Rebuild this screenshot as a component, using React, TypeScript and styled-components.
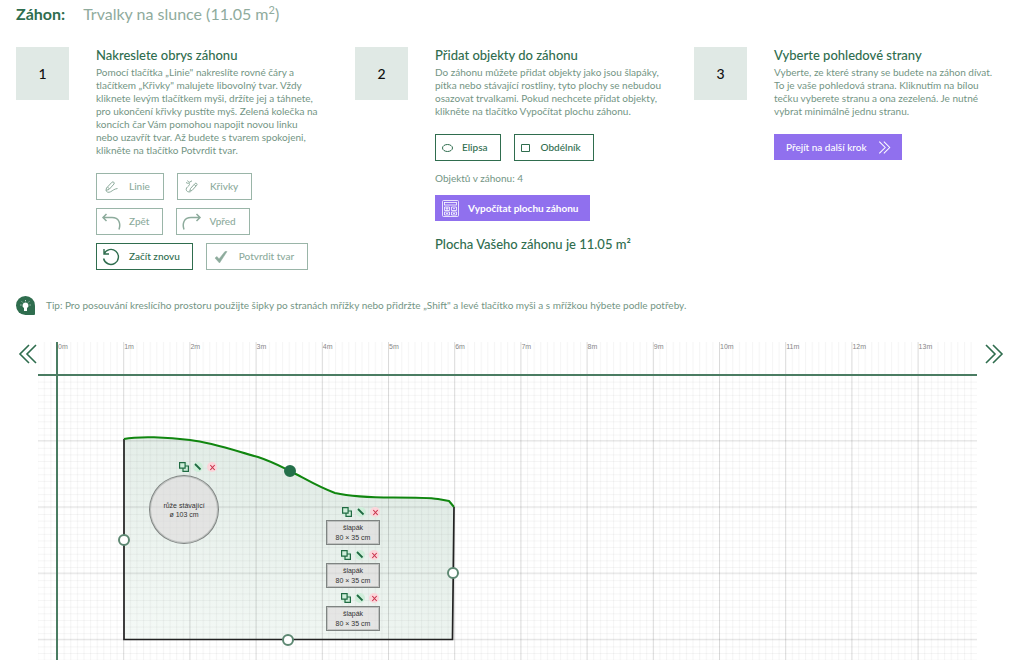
import React from "react";
import styled, { createGlobalStyle, css } from "styled-components";

const green = "#2f6d4e";
const softGreen = "#739584";
const purple = "#9070ee";

const GlobalStyle = createGlobalStyle`
  * { box-sizing: border-box; }
  body { margin: 0; background: #fff; font-family: Lato, "Liberation Sans", sans-serif; }
  h1, h2, p { margin: 0; }
  button { font-family: inherit; cursor: pointer; }
`;

const Page = styled.main`
  display: flex;
  flex-direction: column;
  min-height: 100vh;
  overflow: hidden;
`;

const TitleBar = styled.h1`
  display: flex;
  align-items: center;
  gap: 18px;
  height: 28px;
  padding: 0 16px;
  color: ${green};
  font-size: 16px;
  font-weight: 700;
  line-height: 20px;
`;

const BedName = styled.span`
  color: #8fab9d;
  font-size: 16px;
  font-weight: 400;
  sup { font-size: 11px; line-height: 0; }
`;

const Steps = styled.section`
  display: grid;
  grid-template-columns: repeat(3, minmax(0, 1fr));
  gap: 25px;
  padding: 19px 16px 0;
`;

const Step = styled.article`
  display: grid;
  grid-template-columns: 53px minmax(0, 1fr);
  gap: 27px;
  align-items: start;
`;

const StepNumber = styled.div`
  display: grid;
  place-items: center;
  height: 53px;
  background: #e0e9e5;
  color: #111;
  font-size: 14px;
  font-weight: 500;
`;

const StepTitle = styled.h2`
  color: ${green};
  font-size: 13px;
  font-weight: 500;
  line-height: 16px;
`;

const StepText = styled.p`
  margin: 3px 0 16px;
  color: ${softGreen};
  font-size: 10px;
  line-height: 13px;
  white-space: nowrap;
`;

const ButtonRow = styled.div`
  display: flex;
  gap: 13px;
  margin-bottom: 8px;
`;

const Button = styled.button<{ $muted?: boolean; $filled?: boolean; $trailing?: boolean }>`
  display: inline-flex;
  align-items: center;
  height: 27px;
  padding: 0 12px 0 0;
  border: 1px solid ${green};
  border-radius: 0;
  background: #fff;
  color: ${green};
  font-size: 10px;
  font-weight: 500;
  line-height: 13px;
  white-space: nowrap;
  ${(p) => p.$muted && css`padding-right: 13px; border-color: #9ab5a8; color: #8dab9c;`}
  ${(p) => p.$filled && css`border-color: ${purple}; background: ${purple}; color: #fff; height: 26px; padding-right: 11px; font-weight: 700;`}
  ${(p) => p.$trailing && css`padding: 0 10px 0 11px; gap: 11px; font-weight: 500;`}
`;

const IconSlot = styled.span<{ $width?: number }>`
  display: flex;
  justify-content: center;
  width: ${(p) => p.$width ?? 28}px;
  margin-right: 4px;
`;

const Icon = styled.svg`
  display: block;
  fill: none;
  stroke: currentColor;
  overflow: visible;
`;

const ObjectCount = styled.p`
  margin: 11px 0 10px;
  color: ${softGreen};
  font-size: 10px;
  line-height: 13px;
`;

const Area = styled.p`
  margin-top: 15px;
  color: ${green};
  font-size: 13px;
  font-weight: 500;
  line-height: 16px;
`;

const Tip = styled.aside`
  display: flex;
  align-items: center;
  gap: 11px;
  padding: 18px 16px 0;
  color: ${softGreen};
  font-size: 10px;
  line-height: 13px;
`;

const TipBadge = styled.span`
  display: grid;
  place-items: center;
  width: 19px;
  height: 19px;
  border-radius: 10px 10px 1px 10px;
  background: ${green};
  color: #fff;
`;

const Planner = styled.section`
  display: flex;
  flex: 1;
  align-items: flex-start;
  margin-top: 27px;
`;

const ScrollButton = styled.button<{ $side: "left" | "right" }>`
  display: flex;
  flex: none;
  width: ${(p) => (p.$side === "left" ? 38 : 47)}px;
  padding: ${(p) => (p.$side === "left" ? "2px 0 0 18px" : "2px 0 0 7px")};
  border: 0;
  background: none;
  color: ${green};
`;

const Board = styled.div`
  position: relative;
  flex: 1;
  align-self: stretch;
  min-height: 318px;
  overflow: hidden;
`;

const Drawing = styled.svg`
  position: absolute;
  inset: 0;
  width: 100%;
  height: 100%;
  font-family: "Liberation Sans", sans-serif;
  font-size: 7px;
`;

const SideDot = styled.button<{ $x: number; $y: number; $on?: boolean }>`
  position: absolute;
  left: ${(p) => p.$x - 6}px;
  top: ${(p) => p.$y - 6}px;
  width: 12px;
  height: 12px;
  padding: 0;
  border: 2px solid ${(p) => (p.$on ? "#24704a" : "#5d8872")};
  border-radius: 50%;
  background: ${(p) => (p.$on ? "#24704a" : "#fff")};
`;

const Item = styled.div<{ $x: number; $y: number }>`
  position: absolute;
  left: ${(p) => p.$x}px;
  top: ${(p) => p.$y}px;
  display: flex;
  flex-direction: column;
`;

const Tools = styled.div<{ $indent: number }>`
  display: flex;
  gap: 4px;
  height: 13px;
  padding-left: ${(p) => p.$indent}px;
`;

const Tool = styled.button<{ $danger?: boolean }>`
  display: grid;
  place-items: center;
  width: 10px;
  height: 10px;
  padding: 0;
  border: 0;
  border-radius: 50%;
  background: ${(p) => (p.$danger ? "#fbd5da" : "#cfeeda")};
  color: ${(p) => (p.$danger ? "#c8324b" : "#1f6b42")};
`;

const ItemShape = styled.div<{ $round?: boolean }>`
  display: grid;
  place-content: center;
  width: ${(p) => (p.$round ? 70 : 54)}px;
  height: ${(p) => (p.$round ? 69 : 25)}px;
  border: 1px solid #7f8482;
  outline: 1px solid rgba(127, 132, 130, 0.35);
  outline-offset: -2px;
  border-radius: ${(p) => (p.$round ? "50%" : "0")};
  background: rgba(222, 217, 219, 0.55);
  color: #333;
  font-family: "Liberation Sans", sans-serif;
  font-size: 7px;
  line-height: ${(p) => (p.$round ? 9 : 10)}px;
  text-align: center;
  white-space: nowrap;
`;

const DoubleChevron = ({ size, left }: { size: number; left?: boolean }) => (
  <Icon width={size} height={size} viewBox="0 0 18 20" strokeWidth="1.6" aria-hidden="true">
    {left ? <path d="M10 1 1 10l9 9M17 1l-9 9 9 9" /> : <path d="M1 1l9 9-9 9M8 1l9 9-9 9" />}
  </Icon>
);

const LineIcon = () => (
  <Icon width="13" height="12" viewBox="0 0 13 12" strokeWidth="1">
    <path d="M1.500 7 7 1.200c1-1 3 .4 2 1.800L4 8.500l-3 .8zM2.500 6l2 2" />
    <path d="M1 9.300c.5 2 2.500 2.500 4.500 1.500C8 9.500 9 8 12.500 7.500" />
  </Icon>
);
const CurveIcon = () => (
  <Icon width="13" height="13" viewBox="0 0 13 13" strokeWidth="1">
    <path d="M5.500 8.500 10 3.500c1-1 2.800.4 1.800 1.700L7 10.500l-2.200.6zM9.200 4.500l1.800 1.600" />
    <path d="M1 2.500c1.500 1.500 4 0 3.500 2S1 7 1.200 9.500c.2 2 2 2.800 4.300 2.300M2.500.5 4 2.500 7 .8" />
  </Icon>
);
const UndoIcon = ({ flip }: { flip?: boolean }) => (
  <Icon width="19" height="16" viewBox="0 0 19 16" strokeWidth="1.5">
    <path transform={flip ? "translate(19 0) scale(-1 1)" : undefined} d="M4.500 0 1 3.500 4.500 7M1 3.500h9c7 0 9 6 7 12" />
  </Icon>
);
const ResetIcon = () => (
  <Icon width="16" height="16" viewBox="0 0 16 16" strokeWidth="1.4">
    <path d="M1 0v5h5M1 5A7.500 7.500 0 1 1 .6 9.500" />
  </Icon>
);
const CheckIcon = () => (
  <Icon width="12" height="12" viewBox="0 0 12 12">
    <path d="M0 7l2-1.500 2 2.500L10 .5h2L4.500 12z" fill="currentColor" stroke="currentColor" strokeWidth=".5" />
  </Icon>
);
const CalculatorIcon = () => (
  <Icon width="17" height="17" viewBox="0 0 17 17" strokeWidth=".8">
    <rect x=".5" y=".5" width="16" height="16" rx="1" />
    <rect x="2.500" y="2.500" width="12" height="2.500" />
    <path d="M2.500 7h5v3.500h-5zM9.500 7h5v3.500h-5zM2.500 12h5v3h-5zM9.500 12h5v3h-5zM5 7v3.500M3.500 8.700h3M11 8.700h2M4 13.500h2M11 13.500h2" />
  </Icon>
);

const METRE = 66.2;
const ORIGIN_X = 19;
const ORIGIN_Y = 33;
const edge = "M86 97C100 94 130 95 152 98C176 101 198 109 220 115C235 120 242 124 252 129C266 136 280 145 297 151C315 155 335 155.500 355 155.500C380 155.500 390 155.500 400 157L411 159L416 165";

const items = [
  { x: 111, y: 120, indent: 30, name: "růže stávající", size: "ø 103 cm", round: true },
  { x: 288, y: 165, indent: 16, name: "šlapák", size: "80 × 35 cm" },
  { x: 288, y: 208, indent: 15, name: "šlapák", size: "80 × 35 cm" },
  { x: 288, y: 251, indent: 15, name: "šlapák", size: "80 × 35 cm" },
];

const BoardDrawing = () => (
  <Drawing aria-hidden="true">
    <defs>
      <pattern id="cols" x={ORIGIN_X} width={METRE / 10} height="40" patternUnits="userSpaceOnUse">
        <path d="M.5 0V40" stroke="#000" strokeOpacity=".04" />
      </pattern>
      <pattern id="rows" y={ORIGIN_Y} width="40" height={METRE / 10} patternUnits="userSpaceOnUse">
        <path d="M0 .5H40" stroke="#000" strokeOpacity=".04" />
      </pattern>
      <linearGradient id="bed" x1="0" y1="1" x2=".5" y2="0">
        <stop offset="0" stopColor="#f5faf7" />
        <stop offset="1" stopColor="#e0ebe5" />
      </linearGradient>
    </defs>
    <path d={`${edge}L414.500 297.500H86Z`} fill="url(#bed)" />
    <rect width="100%" height="100%" fill="url(#cols)" />
    <rect y={ORIGIN_Y} width="100%" height="100%" fill="url(#rows)" />
    {Array.from({ length: 13 }, (_, i) => (
      <rect key={i} x={ORIGIN_X + (i + 1) * METRE} width="1" height="100%" fill="#000" fillOpacity=".11" />
    ))}
    {[1, 2, 3, 4].map((i) => (
      <rect key={i} y={ORIGIN_Y + i * METRE - 1} width="100%" height="1" fill="#000" fillOpacity=".11" />
    ))}
    {Array.from({ length: 14 }, (_, i) => (
      <text key={i} x={ORIGIN_X + i * METRE + 1} y="7" fill="#888">{i}m</text>
    ))}
    <rect x="18" width="2" height="100%" fill="#4a7c62" />
    <rect y="32" width="100%" height="2" fill="#4a7c62" />
    <path d="M416 165L414.500 297.500H86V97" fill="none" stroke="#222" strokeWidth="1.700" />
    <path d={edge} fill="none" stroke="#10860f" strokeWidth="2" strokeLinejoin="round" />
  </Drawing>
);

const ItemTools = ({ indent }: { indent: number }) => (
  <Tools $indent={indent}>
    <Tool aria-label="Kopírovat">
      <Icon width="10" height="10" viewBox="0 0 10 10" strokeWidth="1.200">
        <path d="M.6.6h5.500v5.500H.6zM6 4h3.400v5.400H4V6" />
      </Icon>
    </Tool>
    <Tool aria-label="Upravit">
      <Icon width="8" height="8" viewBox="0 0 8 8" strokeWidth="1.800"><path d="M1 1l5.500 5.500" /></Icon>
    </Tool>
    <Tool $danger aria-label="Smazat">
      <Icon width="5" height="5" viewBox="0 0 5 5" strokeWidth="1.100"><path d="M.3 0l4.400 5M4.700 0L.3 5" /></Icon>
    </Tool>
  </Tools>
);

export default function App() {
  return (
    <Page>
      <GlobalStyle />
      <TitleBar>
        Záhon:
        <BedName>Trvalky na slunce (11.05 m<sup>2</sup>)</BedName>
      </TitleBar>

      <Steps>
        <Step>
          <StepNumber>1</StepNumber>
          <div>
            <StepTitle>Nakreslete obrys záhonu</StepTitle>
            <StepText>
              Pomocí tlačítka „Linie" nakreslíte rovné čáry a<br />
              tlačítkem „Křivky" malujete libovolný tvar. Vždy<br />
              kliknete levým tlačítkem myši, držíte jej a táhnete,<br />
              pro ukončení křivky pustíte myš. Zelená kolečka na<br />
              koncích čar Vám pomohou napojit novou linku<br />
              nebo uzavřít tvar. Až budete s tvarem spokojeni,<br />
              klikněte na tlačítko Potvrdit tvar.
            </StepText>
            <ButtonRow>
              <Button $muted><IconSlot><LineIcon /></IconSlot>Linie</Button>
              <Button $muted><IconSlot><CurveIcon /></IconSlot>Křivky</Button>
            </ButtonRow>
            <ButtonRow>
              <Button $muted><IconSlot><UndoIcon /></IconSlot>Zpět</Button>
              <Button $muted><IconSlot><UndoIcon flip /></IconSlot>Vpřed</Button>
            </ButtonRow>
            <ButtonRow>
              <Button><IconSlot><ResetIcon /></IconSlot>Začít znovu</Button>
              <Button $muted><IconSlot><CheckIcon /></IconSlot>Potvrdit tvar</Button>
            </ButtonRow>
          </div>
        </Step>

        <Step>
          <StepNumber>2</StepNumber>
          <div>
            <StepTitle>Přidat objekty do záhonu</StepTitle>
            <StepText>
              Do záhonu můžete přidat objekty jako jsou šlapáky,<br />
              pítka nebo stávající rostliny, tyto plochy se nebudou<br />
              osazovat trvalkami. Pokud nechcete přidat objekty,<br />
              klikněte na tlačítko Vypočítat plochu záhonu.
            </StepText>
            <ButtonRow>
              <Button>
                <IconSlot $width={22}>
                  <Icon width="11" height="8" viewBox="0 0 11 8"><ellipse cx="5.500" cy="4" rx="5" ry="3.500" /></Icon>
                </IconSlot>
                Elipsa
              </Button>
              <Button>
                <IconSlot $width={22}>
                  <Icon width="9" height="8" viewBox="0 0 9 8"><path d="M.5.5h8v7h-8z" /></Icon>
                </IconSlot>
                Obdélník
              </Button>
            </ButtonRow>
            <ObjectCount>Objektů v záhonu: 4</ObjectCount>
            <Button $filled><IconSlot><CalculatorIcon /></IconSlot>Vypočítat plochu záhonu</Button>
            <Area>Plocha Vašeho záhonu je 11.05 m²</Area>
          </div>
        </Step>

        <Step>
          <StepNumber>3</StepNumber>
          <div>
            <StepTitle>Vyberte pohledové strany</StepTitle>
            <StepText>
              Vyberte, ze které strany se budete na záhon dívat.<br />
              To je vaše pohledová strana. Kliknutím na bílou<br />
              tečku vyberete stranu a ona zezelená. Je nutné<br />
              vybrat minimálně jednu stranu.
            </StepText>
            <Button $filled $trailing>Přejít na další krok<DoubleChevron size={13} /></Button>
          </div>
        </Step>
      </Steps>

      <Tip>
        <TipBadge>
          <Icon width="11" height="12" viewBox="0 0 11 12" strokeWidth="1">
            <path d="M5.500 2.500a3 3 0 0 1 1.500 5.600V11H4V8.100A3 3 0 0 1 5.500 2.500z" fill="currentColor" stroke="none" />
            <path d="M5.500 0v1.300M1.800 1.500l.9.900M9.200 1.500l-.9.900M.3 5h1.200M9.500 5h1.200" strokeWidth=".7" />
          </Icon>
        </TipBadge>
        <p>Tip: Pro posouvání kreslícího prostoru použijte šipky po stranách mřížky nebo přidržte „Shift" a levé tlačítko myši a s mřížkou hýbete podle potřeby.</p>
      </Tip>

      <Planner>
        <ScrollButton $side="left" aria-label="Posunout vlevo"><DoubleChevron size={20} left /></ScrollButton>
        <Board>
          <BoardDrawing />
          {items.map((item) => (
            <Item key={item.y} $x={item.x} $y={item.y}>
              <ItemTools indent={item.indent} />
              <ItemShape $round={item.round}>
                <span>{item.name}</span>
                <span>{item.size}</span>
              </ItemShape>
            </Item>
          ))}
          <SideDot $x={252} $y={129} $on aria-label="Horní strana" />
          <SideDot $x={86} $y={198} aria-label="Levá strana" />
          <SideDot $x={415} $y={231} aria-label="Pravá strana" />
          <SideDot $x={250} $y={298} aria-label="Dolní strana" />
        </Board>
        <ScrollButton $side="right" aria-label="Posunout vpravo"><DoubleChevron size={20} /></ScrollButton>
      </Planner>
    </Page>
  );
}
